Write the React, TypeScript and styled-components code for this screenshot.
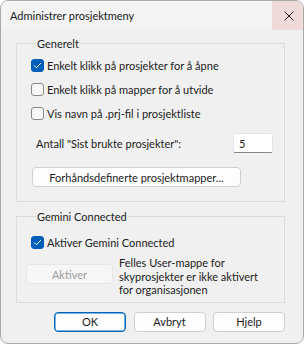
import React from 'react';
import styled, { createGlobalStyle } from 'styled-components';

const GlobalStyle = createGlobalStyle`
  html, body {
    margin: 0;
    padding: 0;
    background: #ffffff;
  }
  * {
    box-sizing: border-box;
  }
`;

const CheckMark = () => (
  <svg width="9" height="9" viewBox="0 0 9 9">
    <path d="M1.2 4.6 L3.4 6.8 L7.8 2.2" fill="none" stroke="#ffffff" strokeWidth="1" />
  </svg>
);

const CloseIcon = () => (
  <svg width="10" height="10" viewBox="0 0 10 10">
    <path d="M0.5 0.5 L9.5 9.5 M9.5 0.5 L0.5 9.5" stroke="#1a1a1a" strokeWidth="1" />
  </svg>
);

const CheckRow = ({ checked, label }: { checked?: boolean; label: string }) => (
  <Row>
    <Box $checked={checked}>{checked && <CheckMark />}</Box>
    <span>{label}</span>
  </Row>
);

const App = () => {
  return (
    <>
      <GlobalStyle />
      <Window>
        <TitleBar>
          <Title>Administrer prosjektmeny</Title>
          <CloseButton>
            <CloseIcon />
          </CloseButton>
        </TitleBar>
        <Body>
          <Group>
            <Legend>Generelt</Legend>
            <CheckRow checked label="Enkelt klikk på prosjekter for å åpne" />
            <CheckRow label="Enkelt klikk på mapper for å utvide" />
            <CheckRow label="Vis navn på .prj-fil i prosjektliste" />
            <CountRow>
              <span>Antall "Sist brukte prosjekter":</span>
              <NumberInput>5</NumberInput>
            </CountRow>
            <WideButton>Forhåndsdefinerte prosjektmapper...</WideButton>
          </Group>
          <Group $second>
            <Legend>Gemini Connected</Legend>
            <CheckRow checked label="Aktiver Gemini Connected" />
            <InfoRow>
              <DisabledButton>Aktiver</DisabledButton>
              <InfoText>
                Felles User-mappe for
                <br />
                skyprosjekter er ikke aktivert
                <br />
                for organisasjonen
              </InfoText>
            </InfoRow>
          </Group>
          <ButtonBar>
            <DialogButton $primary>OK</DialogButton>
            <DialogButton>Avbryt</DialogButton>
            <DialogButton>Hjelp</DialogButton>
          </ButtonBar>
        </Body>
      </Window>
    </>
  );
};

const Window = styled.div`
  width: 304px;
  height: 344px;
  border: 1px solid #a9a9a9;
  border-radius: 8px;
  overflow: hidden;
  background: #f0f0f0;
  font-family: Lato, 'Segoe UI', sans-serif;
  font-size: 11px;
  color: #1b1b1b;
  display: flex;
  flex-direction: column;
`;

const TitleBar = styled.div`
  height: 29px;
  background: #f3f3f3;
  display: flex;
  align-items: center;
  justify-content: space-between;
`;

const Title = styled.div`
  padding-left: 9px;
  font-size: 11px;
  color: #1a1a1a;
`;

const CloseButton = styled.div`
  width: 31px;
  height: 29px;
  background: #efd9d9;
  display: flex;
  align-items: center;
  justify-content: center;
  padding-left: 2px;
`;

const Body = styled.div`
  padding: 6px 18px 0 15px;
  display: flex;
  flex-direction: column;
`;

const Group = styled.fieldset<{ $second?: boolean }>`
  margin: ${(p) => (p.$second ? '7px 0 0 0' : '0')};
  padding: ${(p) => (p.$second ? '7px 11px 5px 14px' : '3px 11px 14px 14px')};
  border: 1px solid #dcdcdc;
  min-width: 0;
  display: flex;
  flex-direction: column;
`;

const Legend = styled.legend`
  padding: 0 1px;
  margin-left: 5px;
  line-height: 14px;
  transform: translateY(1px);
`;

const Row = styled.div`
  height: 24px;
  display: flex;
  align-items: center;
  gap: 3px;
  white-space: nowrap;
`;

const Box = styled.div<{ $checked?: boolean }>`
  width: 13px;
  height: 13px;
  border-radius: 3px;
  flex: none;
  display: flex;
  align-items: center;
  justify-content: center;
  background: ${(p) => (p.$checked ? '#005fb8' : '#f7f7f7')};
  border: 1px solid ${(p) => (p.$checked ? '#005fb8' : '#8a8a8a')};
`;

const CountRow = styled.div`
  margin-top: 8px;
  height: 20px;
  padding-left: 5px;
  display: flex;
  align-items: center;
  justify-content: space-between;
  white-space: nowrap;
`;

const NumberInput = styled.div`
  width: 40px;
  height: 20px;
  background: #ffffff;
  border: 1px solid #e5e5e5;
  border-bottom-color: #868686;
  border-radius: 2px;
  padding-left: 5px;
  display: flex;
  align-items: center;
`;

const ButtonBase = styled.div`
  height: 20px;
  background: #fdfdfd;
  border: 1px solid #d0d0d0;
  border-radius: 4px;
  display: flex;
  align-items: center;
  justify-content: center;
  white-space: nowrap;
`;

const WideButton = styled(ButtonBase)`
  margin-top: 14px;
  margin-left: 1px;
  width: 209px;
`;

const InfoRow = styled.div`
  margin-top: 2px;
  margin-left: -5px;
  display: flex;
  align-items: flex-start;
  gap: 6px;
`;

const DisabledButton = styled(ButtonBase)`
  margin-top: 8px;
  width: 87px;
  background: #f6f6f6;
  border-color: #e6e6e6;
  color: #9d9d9d;
`;

const InfoText = styled.div`
  line-height: 13.5px;
  white-space: nowrap;
`;

const ButtonBar = styled.div`
  margin-top: 9px;
  display: flex;
  justify-content: flex-end;
  gap: 7.5px;
`;

const DialogButton = styled(ButtonBase)<{ $primary?: boolean }>`
  width: 72px;
  border-color: ${(p) => (p.$primary ? '#0067c0' : '#d0d0d0')};
  box-shadow: ${(p) => (p.$primary ? 'inset 0 0 0 0.5px #0067c0' : 'none')};
`;

export default App;
